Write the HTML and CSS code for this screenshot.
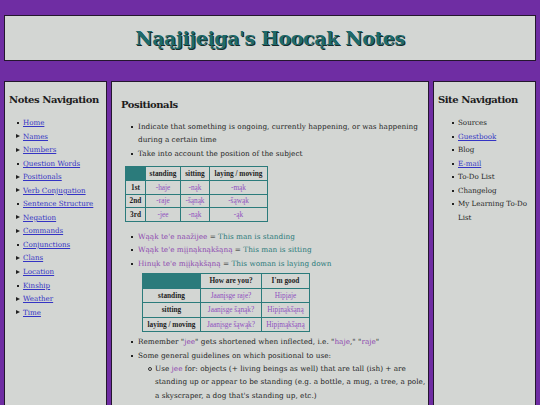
FILE: index.html
```html
<!DOCTYPE html>
<html>
<head>
<meta charset="utf-8">
<link rel="stylesheet" href="styles.css">
</head>
<body>
<div class="page">
  <header class="banner"><h1 class="title">Nąąjijeįga's Hoocąk Notes</h1></header>
  <div class="cols">
    <nav class="box side">
      <h2 class="heading">Notes Navigation</h2>
      <ul class="navlist">
        <li class="dot"><a href="#">Home</a></li>
        <li class="tri"><a href="#">Names</a></li>
        <li class="tri"><a href="#">Numbers</a></li>
        <li class="dot"><a href="#">Question Words</a></li>
        <li class="tri"><a href="#">Positionals</a></li>
        <li class="tri"><a href="#">Verb Conjugation</a></li>
        <li class="dot"><a href="#">Sentence Structure</a></li>
        <li class="tri"><a href="#">Negation</a></li>
        <li class="tri"><a href="#">Commands</a></li>
        <li class="dot"><a href="#">Conjunctions</a></li>
        <li class="tri"><a href="#">Clans</a></li>
        <li class="tri"><a href="#">Location</a></li>
        <li class="dot"><a href="#">Kinship</a></li>
        <li class="tri"><a href="#">Weather</a></li>
        <li class="tri"><a href="#">Time</a></li>
      </ul>
    </nav>
    <main class="box main">
      <h2 class="heading main-heading">Positionals</h2>
      <ul class="list">
        <li>Indicate that something is ongoing, currently happening, or was happening during a certain time</li>
        <li>Take into account the position of the subject</li>
      </ul>
      <table class="tbl tbl1">
        <tr><th class="corner"></th><th>standing</th><th>sitting</th><th>laying / moving</th></tr>
        <tr><th>1st</th><td>-haje</td><td>-nąk</td><td>-mąk</td></tr>
        <tr><th>2nd</th><td>-raje</td><td>-šąnąk</td><td>-šąwąk</td></tr>
        <tr><th>3rd</th><td>-jee</td><td>-nąk</td><td>-ąk</td></tr>
      </table>
      <ul class="list examples">
        <li><span class="hc">Wąąk te'e naažijee</span> = <span class="en">This man is standing</span></li>
        <li><span class="hc">Wąąk te'e mįįnąknąkšąną</span> = <span class="en">This man is sitting</span></li>
        <li><span class="hc">Hinųk te'e mįįkąkšąną</span> = <span class="en">This woman is laying down</span></li>
      </ul>
      <table class="tbl tbl2">
        <tr><th class="corner"></th><th>How are you?</th><th>I'm good</th></tr>
        <tr><th>standing</th><td>Jaanįsge raje?</td><td>Hipįaje</td></tr>
        <tr><th>sitting</th><td>Jaanįsge šąnąk?</td><td>Hipįnąkšąną</td></tr>
        <tr><th>laying / moving</th><td>Jaanįsge šąwąk?</td><td>Hipįmąkšąną</td></tr>
      </table>
      <ul class="list">
        <li>Remember "<span class="hc">jee</span>" gets shortened when inflected, i.e. "<span class="hc">haje</span>," "<span class="hc">raje</span>"</li>
        <li>Some general guidelines on which positional to use:
          <ul class="sublist">
            <li>Use <span class="hc">jee</span> for: objects (+ living beings as well) that are tall (ish) + are standing up or appear to be standing (e.g. a bottle, a mug, a tree, a pole, a skyscraper, a dog that's standing up, etc.)</li>
          </ul>
        </li>
      </ul>
    </main>
    <nav class="box side">
      <h2 class="heading">Site Navigation</h2>
      <ul class="navlist sitelist">
        <li class="dot">Sources</li>
        <li class="dot"><a href="#">Guestbook</a></li>
        <li class="dot">Blog</li>
        <li class="dot"><a href="#">E-mail</a></li>
        <li class="dot">To-Do List</li>
        <li class="dot">Changelog</li>
        <li class="dot">My Learning To-Do List</li>
      </ul>
    </nav>
  </div>
</div>
</body>
</html>
```

FILE: styles.css
```css
html, body {
  margin: 0;
  padding: 0;
}
body {
  background: #6f2da3;
  font-family: "DejaVu Serif", serif;
  color: #262626;
  height: 405px;
  overflow: hidden;
}
.page {
  padding: 15px 4px 0;
}
.banner {
  height: 44px;
  border: 1px solid #24172e;
  background: #d3d6d3;
  display: flex;
  align-items: center;
  justify-content: center;
}
.title {
  margin: 0;
  font-size: 19px;
  font-weight: bold;
  color: #1d6a6a;
  text-shadow: 1px 1px 0 #1a2a2a;
  letter-spacing: -0.4px;
}
.cols {
  display: grid;
  grid-template-columns: 103px 1fr 103px;
  gap: 4px;
  margin-top: 20px;
}
.box {
  background: #d3d6d3;
  border: 1px solid #24172e;
  border-bottom: none;
  height: 330px;
  box-sizing: border-box;
}
.side {
  padding: 12px 4px 0 4px;
}
.main {
  padding: 17px 2px 0 9px;
}
.heading {
  margin: 0 0 11px;
  font-size: 10px;
  font-weight: bold;
  color: #1c1c1c;
  letter-spacing: -0.45px;
}
.main-heading {
  margin-bottom: 10px;
}
.navlist {
  list-style: none;
  margin: 0;
  padding: 0 0 0 14px;
  font-size: 7.1px;
  line-height: 13.55px;
}
.navlist li {
  position: relative;
}
.navlist li.dot::before {
  content: "";
  position: absolute;
  left: -6px;
  top: 6px;
  width: 2px;
  height: 2px;
  background: #222;
}
.navlist li.tri::before {
  content: "";
  position: absolute;
  left: -7px;
  top: 4.5px;
  border-left: 4px solid #222;
  border-top: 2.5px solid transparent;
  border-bottom: 2.5px solid transparent;
}
.navlist a {
  color: #3434c4;
  text-decoration: underline;
}
.sitelist {
  padding-left: 20px;
}
.list {
  margin: 0;
  padding: 0 0 0 17px;
  list-style: none;
  font-size: 7.3px;
  line-height: 13.4px;
}
.list > li {
  position: relative;
}
.list > li::before {
  content: "";
  position: absolute;
  left: -7px;
  top: 6px;
  width: 2px;
  height: 2px;
  background: #222;
}
.sublist {
  list-style: none;
  margin: 0;
  padding: 0 0 0 17px;
}
.sublist li {
  position: relative;
}
.sublist li::before {
  content: "";
  position: absolute;
  left: -7px;
  top: 5px;
  width: 2px;
  height: 2px;
  border: 0.8px solid #333;
  border-radius: 50%;
}
.hc {
  color: #8e4bb0;
}
.en {
  color: #2a7a7a;
}
.tbl {
  border-collapse: collapse;
  font-family: "Liberation Serif", serif;
  font-size: 7.3px;
  color: #1d1d1d;
  border: 1.5px solid #2b7b7b;
}
.tbl th, .tbl td {
  border: 1.5px solid #2b7b7b;
  text-align: center;
  padding: 0 3px;
}
.tbl th {
  font-weight: bold;
}
.tbl td {
  color: #9050c0;
}
.tbl .corner {
  background: #2b7b7b;
}
.tbl1 {
  margin: 6px 0 8px 4px;
}
.tbl1 tr {
  height: 13.7px;
}
.tbl1 th:first-child { width: 13px; }
.tbl1 tr:first-child th:nth-child(2) { width: 28px; }
.tbl1 tr:first-child th:nth-child(3) { width: 22px; }
.tbl1 tr:first-child th:nth-child(4) { width: 51px; }
.examples {
  margin-bottom: 3px;
}
.tbl2 {
  margin: 0 0 3px 21px;
}
.tbl2 tr {
  height: 14.5px;
}
.tbl2 th:first-child { width: 51px; }
.tbl2 tr:first-child th:nth-child(2) { width: 54px; }
.tbl2 tr:first-child th:nth-child(3) { width: 41px; }
```
